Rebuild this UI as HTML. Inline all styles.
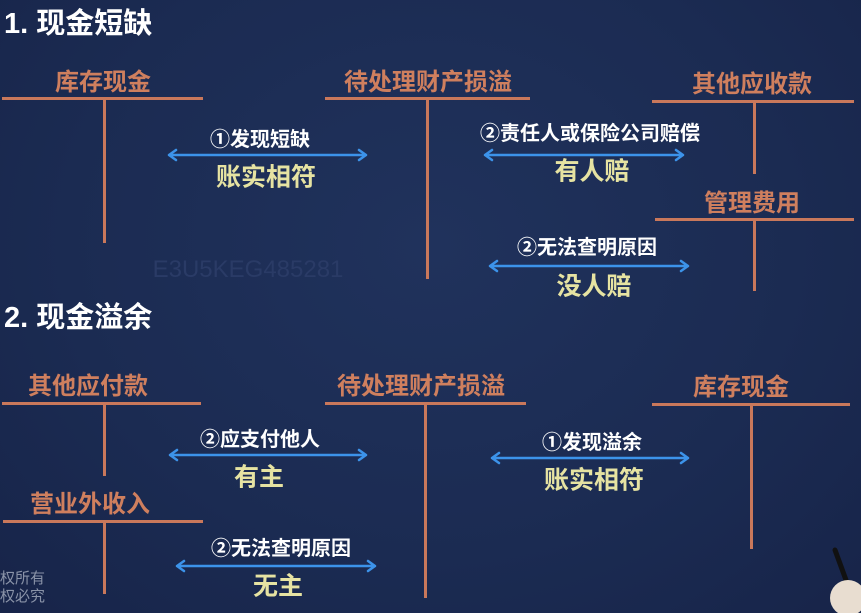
<!DOCTYPE html>
<html><head><meta charset="utf-8"><style>
html,body{margin:0;padding:0}
body{width:861px;height:613px;overflow:hidden;position:relative;
background:radial-gradient(ellipse at 50% 40%,#20325c 0%,#1b2b52 60%,#172449 100%);
font-family:"Liberation Sans","Noto Sans CJK SC",sans-serif;font-weight:bold}
.t{position:absolute;white-space:nowrap;transform:translate(-50%,-50%);line-height:1}
.o{color:#cf7f5e;font-size:24px}
.w{color:#fff;font-size:20px}
.y{color:#e6e3a2;font-size:25px}
.h{position:absolute;height:3px;background:#c9785b}
.v{position:absolute;width:3px;background:#c9785b}
.ti{position:absolute;color:#fff;font-size:29px;line-height:1}
svg{position:absolute;left:0;top:0}
</style></head><body>
<div class="ti" style="left:4px;top:10px">1. 现金短缺</div>
<div class="ti" style="left:4px;top:304px">2. 现金溢余</div>

<div class="t o" style="left:103px;top:83px">库存现金</div>
<div class="h" style="left:2px;top:97px;width:201px"></div>
<div class="v" style="left:103px;top:98px;height:145px"></div>

<div class="t o" style="left:428px;top:83px">待处理财产损溢</div>
<div class="h" style="left:325px;top:97px;width:205px"></div>
<div class="v" style="left:426px;top:98px;height:181px"></div>

<div class="t o" style="left:752px;top:85px">其他应收款</div>
<div class="h" style="left:652px;top:100px;width:202px"></div>
<div class="v" style="left:753px;top:101px;height:73px"></div>

<div class="t o" style="left:752px;top:204px">管理费用</div>
<div class="h" style="left:655px;top:218px;width:199px"></div>
<div class="v" style="left:753px;top:219px;height:72px"></div>

<div class="t w" style="left:260px;top:140px">①发现短缺</div>
<div class="t y" style="left:266px;top:178px">账实相符</div>
<div class="t w" style="left:590px;top:134px">②责任人或保险公司赔偿</div>
<div class="t y" style="left:592px;top:172px">有人赔</div>
<div class="t w" style="left:587px;top:248px">②无法查明原因</div>
<div class="t y" style="left:594px;top:287px">没人赔</div>

<div class="t" style="left:248px;top:270px;color:#2a3b66;font-size:24px;font-weight:normal">E3U5KEG485281</div>

<div class="t o" style="left:88px;top:387px">其他应付款</div>
<div class="h" style="left:2px;top:402px;width:199px"></div>
<div class="v" style="left:103px;top:403px;height:73px"></div>

<div class="t o" style="left:90px;top:505px">营业外收入</div>
<div class="h" style="left:3px;top:520px;width:200px"></div>
<div class="v" style="left:103px;top:521px;height:73px"></div>

<div class="t o" style="left:421px;top:387px">待处理财产损溢</div>
<div class="h" style="left:325px;top:402px;width:201px"></div>
<div class="v" style="left:424px;top:403px;height:195px"></div>

<div class="t o" style="left:741px;top:388px">库存现金</div>
<div class="h" style="left:652px;top:403px;width:198px"></div>
<div class="v" style="left:750px;top:404px;height:145px"></div>

<div class="t w" style="left:260px;top:440px">②应支付他人</div>
<div class="t y" style="left:259px;top:478px">有主</div>
<div class="t w" style="left:592px;top:443px">①发现溢余</div>
<div class="t y" style="left:594px;top:481px">账实相符</div>
<div class="t w" style="left:281px;top:549px">②无法查明原因</div>
<div class="t y" style="left:278px;top:587px">无主</div>

<div style="position:absolute;left:0;top:570px;color:#8a93a8;font-size:15px;font-weight:normal;line-height:18px">权所有<br>权必究</div>

<svg width="861" height="613" fill="none" stroke="#3c93ea" stroke-width="2.5" stroke-linecap="round" stroke-linejoin="round">
<g><path d="M169 155H366M176 150l-7 5 7 5M359 150l7 5-7 5"/></g>
<g><path d="M485 155H683M492 150l-7 5 7 5M676 150l7 5-7 5"/></g>
<g><path d="M490 266H688M497 261l-7 5 7 5M681 261l7 5-7 5"/></g>
<g><path d="M170 455H366M177 450l-7 5 7 5M359 450l7 5-7 5"/></g>
<g><path d="M492 458H688M499 453l-7 5 7 5M681 453l7 5-7 5"/></g>
<g><path d="M177 566H375M184 561l-7 5 7 5M368 561l7 5-7 5"/></g>
<path d="M835 550L846 580" stroke="#111" stroke-width="5"/>
<ellipse cx="848" cy="598" rx="18" ry="18" fill="#e8ddd0" stroke="none"/>
</svg>
</body></html>
